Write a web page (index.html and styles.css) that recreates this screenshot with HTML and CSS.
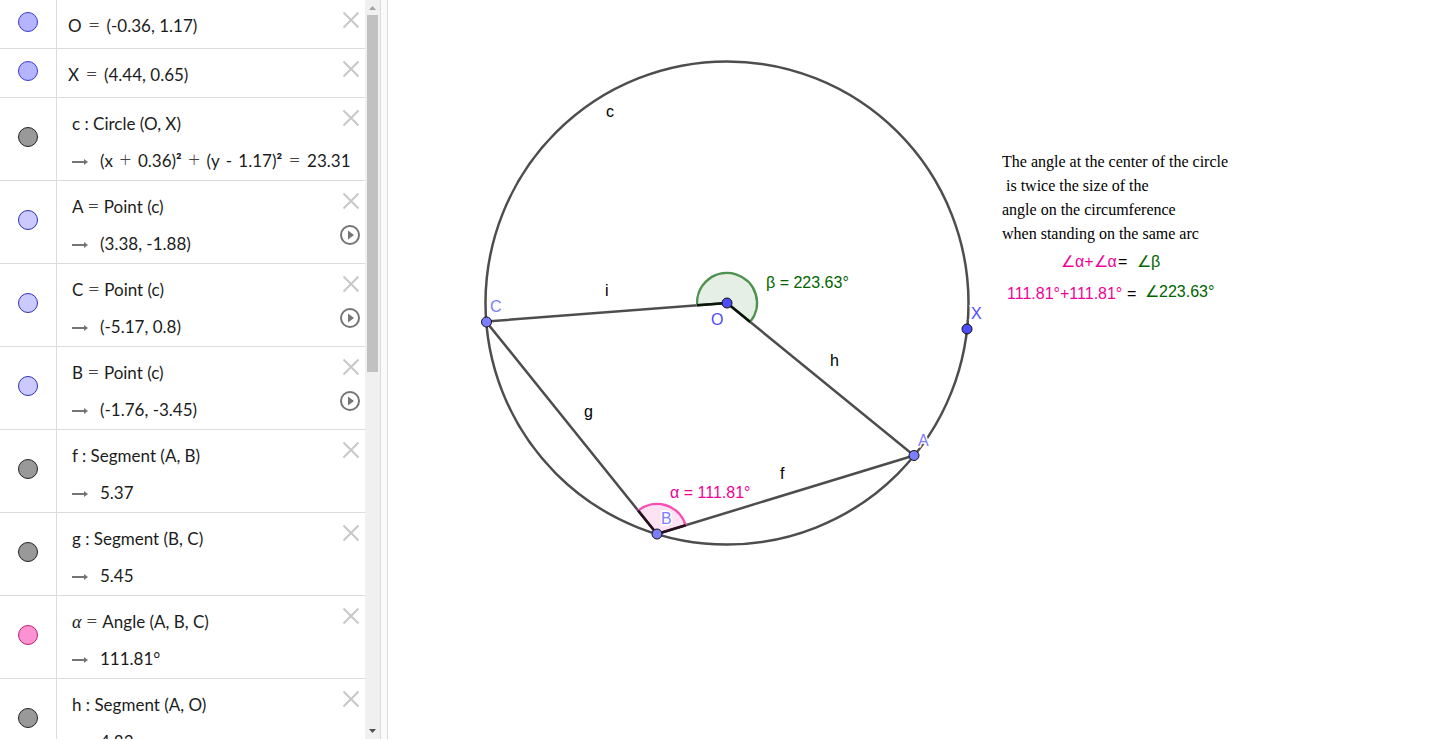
FILE: index.html
```
<!DOCTYPE html>
<html lang="en">
<head>
<meta charset="utf-8">
<title>Angle at the center of a circle</title>
<link rel="stylesheet" href="styles.css">
</head>
<body>
<svg class="sprite" aria-hidden="true">
  <symbol id="close" viewBox="0 0 18 18"><path d="M1.5 1.5l15 15M16.5 1.5l-15 15" fill="none" stroke="#c8c8c8" stroke-width="2"/></symbol>
  <symbol id="play" viewBox="0 0 20 20"><circle cx="10" cy="10" r="9" fill="none" stroke="#757575" stroke-width="2"/><path d="M8 5.5v9l6-4.5z" fill="#757575"/></symbol>
  <symbol id="arrow" viewBox="0 0 16 8"><path d="M0 4h13" stroke="#757575" stroke-width="2"/><path d="M12 1l4 3-4 3z" fill="#757575"/></symbol>
</svg>
<main class="app">
  <section class="algebra" aria-label="Algebra">
    <ul class="rows">
      <li class="row single">
        <div class="side"><button class="marble blue" aria-label="Show or hide O"></button></div>
        <div class="content"><div class="line">O <i>=</i> (-0.36, 1.17)</div></div>
        <div class="tools"><button class="close" aria-label="Delete O"><svg><use href="#close"/></svg></button></div>
      </li>
      <li class="row single">
        <div class="side"><button class="marble blue" aria-label="Show or hide X"></button></div>
        <div class="content"><div class="line">X <i>=</i> (4.44, 0.65)</div></div>
        <div class="tools"><button class="close" aria-label="Delete X"><svg><use href="#close"/></svg></button></div>
      </li>
      <li class="row">
        <div class="side"><button class="marble gray" aria-label="Show or hide c"></button></div>
        <div class="content"><div class="line tight">c : Circle (O, X)</div><div class="line"><svg class="arrow"><use href="#arrow"/></svg>(x <i>+</i> 0.36)<b>²</b> <i>+</i> (y <span class="minus">-</span> 1.17)<b>²</b> <i>=</i> 23.31</div></div>
        <div class="tools"><button class="close" aria-label="Delete c"><svg><use href="#close"/></svg></button></div>
      </li>
      <li class="row">
        <div class="side"><button class="marble pale" aria-label="Show or hide A"></button></div>
        <div class="content"><div class="line tight">A <i>=</i> Point (c)</div><div class="line"><svg class="arrow"><use href="#arrow"/></svg>(3.38, -1.88)</div></div>
        <div class="tools"><button class="close" aria-label="Delete A"><svg><use href="#close"/></svg></button><button class="play" aria-label="Animate A"><svg><use href="#play"/></svg></button></div>
      </li>
      <li class="row">
        <div class="side"><button class="marble pale" aria-label="Show or hide C"></button></div>
        <div class="content"><div class="line tight">C <i>=</i> Point (c)</div><div class="line"><svg class="arrow"><use href="#arrow"/></svg>(-5.17, 0.8)</div></div>
        <div class="tools"><button class="close" aria-label="Delete C"><svg><use href="#close"/></svg></button><button class="play" aria-label="Animate C"><svg><use href="#play"/></svg></button></div>
      </li>
      <li class="row">
        <div class="side"><button class="marble pale" aria-label="Show or hide B"></button></div>
        <div class="content"><div class="line tight">B <i>=</i> Point (c)</div><div class="line"><svg class="arrow"><use href="#arrow"/></svg>(-1.76, -3.45)</div></div>
        <div class="tools"><button class="close" aria-label="Delete B"><svg><use href="#close"/></svg></button><button class="play" aria-label="Animate B"><svg><use href="#play"/></svg></button></div>
      </li>
      <li class="row">
        <div class="side"><button class="marble gray" aria-label="Show or hide f"></button></div>
        <div class="content"><div class="line tight">f : Segment (A, B)</div><div class="line"><svg class="arrow"><use href="#arrow"/></svg>5.37</div></div>
        <div class="tools"><button class="close" aria-label="Delete f"><svg><use href="#close"/></svg></button></div>
      </li>
      <li class="row">
        <div class="side"><button class="marble gray" aria-label="Show or hide g"></button></div>
        <div class="content"><div class="line tight">g : Segment (B, C)</div><div class="line"><svg class="arrow"><use href="#arrow"/></svg>5.45</div></div>
        <div class="tools"><button class="close" aria-label="Delete g"><svg><use href="#close"/></svg></button></div>
      </li>
      <li class="row">
        <div class="side"><button class="marble pink" aria-label="Show or hide α"></button></div>
        <div class="content"><div class="line tight"><em>α</em> <i>=</i> Angle (A, B, C)</div><div class="line"><svg class="arrow"><use href="#arrow"/></svg>111.81°</div></div>
        <div class="tools"><button class="close" aria-label="Delete α"><svg><use href="#close"/></svg></button></div>
      </li>
      <li class="row">
        <div class="side"><button class="marble gray" aria-label="Show or hide h"></button></div>
        <div class="content"><div class="line tight">h : Segment (A, O)</div><div class="line"><svg class="arrow"><use href="#arrow"/></svg>4.83</div></div>
        <div class="tools"><button class="close" aria-label="Delete h"><svg><use href="#close"/></svg></button></div>
      </li>
    </ul>
    <div class="scrollbar" aria-hidden="true">
      <svg class="cap" viewBox="0 0 15 15"><path d="M4 10h7L7.500 6z" fill="#a3a3a3"/></svg>
      <div class="track"><div class="thumb"></div></div>
      <svg class="cap" viewBox="0 0 15 15"><path d="M4 5h7l-3.500 4z" fill="#505050"/></svg>
    </div>
  </section>
  <div class="splitter"></div>
  <section class="graphics" aria-label="Graphics">
    <svg class="figure" viewBox="388 0 1052 739" preserveAspectRatio="xMinYMin meet">
      <g class="stroke">
        <circle cx="727" cy="303" r="241.500"/>
        <path d="M914 455.500L657 534L486 321.500L727 303Z"/>
      </g>
      <path class="beta-fill" d="M727 303L697.100 305.300A30 30 0 1 1 750.200 322Z"/>
      <path class="beta-arc" d="M697.100 305.300A30 30 0 1 1 750.200 322"/>
      <path class="beta-legs" d="M697.100 305.300L727 303L750.200 322"/>
      <path class="alpha-fill" d="M657 534L685.700 525.200A30 30 0 0 0 638.200 510.600Z"/>
      <path class="alpha-arc" d="M685.700 525.200A30 30 0 0 0 638.200 510.600"/>
      <path class="alpha-legs" d="M685.700 525.200L657 534L638.200 510.600"/>
      <g class="label">
        <text x="606" y="117">c</text>
        <text x="605" y="296">i</text>
        <text x="830" y="366">h</text>
        <text x="584" y="417">g</text>
        <text x="780" y="479">f</text>
        <text class="green" x="766" y="288">β = 223.63°</text>
        <text class="pink-text" x="670" y="498">α = 111.81°</text>
        <text class="free" x="711" y="325">O</text>
        <text class="free" x="971" y="319">X</text>
        <text class="bound" x="490" y="312">C</text>
        <text class="bound" x="918" y="446">A</text>
        <text class="bound" x="661" y="524">B</text>
      </g>
      <g class="points">
        <circle class="free" cx="727" cy="303" r="5"/>
        <circle class="free" cx="967" cy="329" r="5"/>
        <circle class="bound" cx="486.500" cy="322" r="5"/>
        <circle class="bound" cx="914" cy="455.500" r="5"/>
        <circle class="bound" cx="657" cy="534" r="5"/>
      </g>
      <g class="note">
        <text x="1002" y="167">The angle at the center of the circle</text>
        <text x="1006" y="191">is twice the size of the</text>
        <text x="1002" y="215">angle on the circumference</text>
        <text x="1002" y="239">when standing on the same arc</text>
      </g>
      <g class="label">
        <text class="pink-text" x="1061" y="267">∠α+∠α</text>
        <text x="1118" y="267">=</text>
        <text class="green" x="1137" y="267">∠β</text>
        <text class="pink-text" x="1007" y="299">111.81°+111.81°</text>
        <text x="1127" y="299">=</text>
        <text class="green" x="1145" y="297">∠223.63°</text>
      </g>
    </svg>
  </section>
</main>
</body>
</html>
```
FILE: styles.css
```
* { box-sizing: border-box; }
body { margin: 0; background: #fff; overflow: hidden; }
button { padding: 0; border: 0; background: none; cursor: pointer; }
svg { display: block; }
.sprite { position: absolute; width: 0; height: 0; }

.app { display: flex; height: calc(100vh - 2px); overflow: hidden; }
.algebra { display: flex; flex: none; width: 380px; overflow: hidden; }
.rows { flex: 1; min-width: 0; margin: 0; padding: 0; list-style: none; }
.row { display: flex; position: relative; height: 83px; border-bottom: 1px solid #dcdcdc; }
.row.single { height: 49px; }
.side { flex: none; width: 57px; padding: 29px 18px 0; border-right: 1px solid #dcdcdc; }
.single .side { padding-top: 12px; }
.marble { display: block; width: 20px; height: 20px; border: 1px solid; border-radius: 50%; }
.blue { background: #b5b5ff; border-color: #3b3bd0; }
.pale { background: #cacaff; border-color: #3030b0; }
.gray { background: #999; border-color: #222; }
.pink { background: #fb93d3; border-color: #b8206f; }

.content { padding: 7px 0 0 15px; color: #1c1c1c; font: 17px/37px Lato, "Open Sans", sans-serif; white-space: nowrap; }
.single .content { padding-left: 11px; }
.line { height: 37px; white-space: pre; }
.line i { margin: 0 2px; color: #444; font-size: 21px; font-style: normal; font-weight: 300; line-height: 1; }
.tight i { margin: 0; }
.minus { margin: 0 2px; }
.line em { font-family: "Liberation Serif", serif; font-size: 18px; line-height: 1; }
.arrow { display: inline-block; width: 16px; height: 8px; margin-right: 12px; vertical-align: 1px; }

/* Row controls float over the end of the formula. */
.tools { position: absolute; top: 11px; right: 5px; display: flex; flex-direction: column; align-items: flex-end; gap: 15px; }
.close svg { width: 18px; height: 18px; }
.play svg { width: 20px; height: 20px; }

.scrollbar { display: flex; flex: none; flex-direction: column; width: 15px; background: #f0f0f0; }
.cap { width: 15px; height: 15px; }
.track { flex: 1; padding: 0 2px; }
.thumb { height: 357px; background: #c1c1c1; }
.splitter { flex: none; width: 8px; background: #fafafa; border: solid #dcdcdc; border-width: 0 1px; }

.graphics { flex: 1; min-width: 0; }
.figure { width: 100%; height: 100%; }
.stroke { fill: none; stroke: #4d4d4d; stroke-width: 2.5; }
.beta-fill { fill: #006400; fill-opacity: .1; }
.beta-arc { fill: none; stroke: #4f914f; stroke-width: 2.5; }
.beta-legs { fill: none; stroke: #0b160b; stroke-width: 2.5; }
.alpha-fill { fill: #f0149b; fill-opacity: .12; }
.alpha-arc { fill: none; stroke: #f84fb4; stroke-width: 2.5; }
.alpha-legs { fill: none; stroke: #29101f; stroke-width: 2.5; }
.points circle { stroke: #111; stroke-width: 1; }
.free { fill: #4d4dff; }
.bound { fill: #7d7dff; }
.label { font: 16px "Liberation Sans", Arial, sans-serif; }
.label text { stroke: #fff; stroke-width: 3; paint-order: stroke; }
.green { fill: #006400; }
.pink-text { fill: #f00096; }
.note { font: 16px "Liberation Serif", "Times New Roman", serif; }
```
